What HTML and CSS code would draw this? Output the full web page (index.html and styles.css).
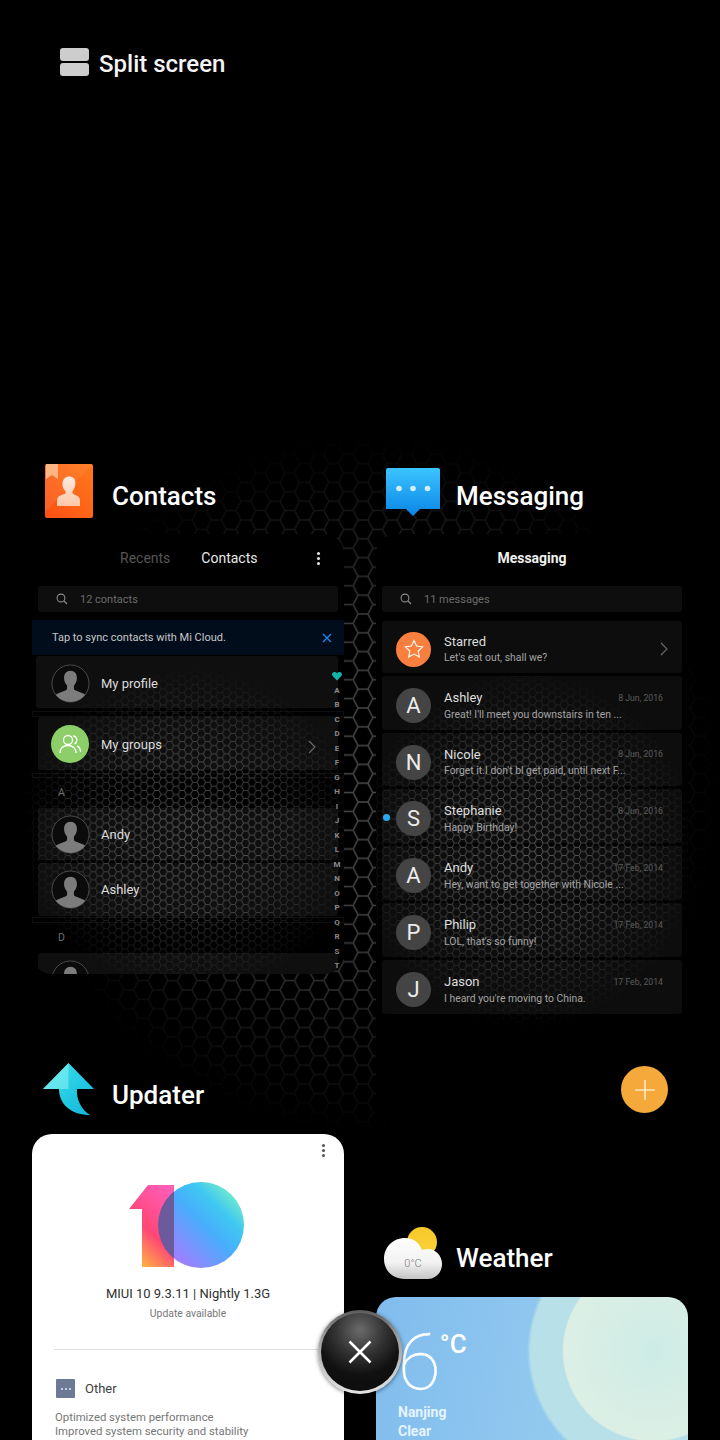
FILE: index.html
```html
<!DOCTYPE html>
<html lang="en">
<head>
<meta charset="utf-8">
<title>Recents</title>
<link rel="stylesheet" href="styles.css">
</head>
<body>
<svg class="sprite" aria-hidden="true">
  <defs>
    <pattern id="hex-big" width="29.3" height="18.8" patternUnits="userSpaceOnUse" patternTransform="translate(1.63 12.4)">
      <path d="M0 9.4 4.885 0H14.65L19.54 9.4 14.65 18.8H4.885ZM19.54 9.4H29.3" fill="none" stroke="#4c4c4c" stroke-width="1.5"/>
    </pattern>
    <pattern id="hex-small" width="12.69" height="8.14" patternUnits="userSpaceOnUse">
      <path d="M0 4.07 2.115 0H6.345L8.46 4.07 6.345 8.14H2.115ZM8.46 4.07H12.69" fill="none" stroke="#5c5c5c" stroke-width=".9"/>
    </pattern>
    <symbol id="person" viewBox="0 0 40 40">
      <clipPath id="ring"><circle cx="20" cy="20" r="19"/></clipPath>
      <circle cx="20" cy="20" r="19" fill="#0b0b0b" stroke="#4e4e4e" stroke-width="1"/>
      <g clip-path="url(#ring)" fill="#7c7c7c">
        <path d="M20 7c4.2 0 6.6 3 6.6 7.4 0 3.2-1.3 6.1-3.1 7.6v3.1c0 1.2 1 1.7 3.2 2.6l6.3 2.6c2 .9 3.5 2.2 4 4V40H3v-5.7c.5-1.8 2-3.100 4-4l6.300-2.600c2.200-.9 3.200-1.400 3.200-2.600V22c-1.800-1.500-3.100-4.400-3.100-7.600C13.400 10 15.800 7 20 7Z"/>
      </g>
    </symbol>
    <symbol id="search" viewBox="0 0 12 12">
      <circle cx="5" cy="5" r="3.900" fill="none" stroke="#8a8a8a" stroke-width="1.100"/>
      <path d="M8 8l3 3" stroke="#8a8a8a" stroke-width="1.200" fill="none"/>
    </symbol>
    <symbol id="chevron" viewBox="0 0 8 14">
      <path d="M1 1l6 6-6 6" fill="none" stroke="#6a6a6a" stroke-width="1.100"/>
    </symbol>
    <linearGradient id="g-contacts" x1="1" y1="0" x2="0" y2="1"><stop offset="0" stop-color="#ff7a1a"/><stop offset="1" stop-color="#fb4f14"/></linearGradient>
    <linearGradient id="g-person" x1="0" y1="0" x2="0" y2="1"><stop offset="0" stop-color="#fff" stop-opacity=".85"/><stop offset="1" stop-color="#ffe2cf" stop-opacity=".8"/></linearGradient>
    <linearGradient id="g-msg" x1="0" y1="0" x2="0" y2="1"><stop offset="0" stop-color="#3cc4ff"/><stop offset="1" stop-color="#0a86e6"/></linearGradient>
    <linearGradient id="g-up" x1="0" y1="0" x2="1" y2="1"><stop offset="0" stop-color="#3fe3ee"/><stop offset="1" stop-color="#0fb6d8"/></linearGradient>
    <linearGradient id="g-one" x1=".7" y1="0" x2=".2" y2="1"><stop offset="0" stop-color="#ff5cb4"/><stop offset=".55" stop-color="#ff4676"/><stop offset="1" stop-color="#ffbe3e"/></linearGradient>
    <linearGradient id="g-zero" x1="0" y1="1" x2="1" y2="0"><stop offset=".14" stop-color="#a57cff"/><stop offset=".52" stop-color="#48aefc"/><stop offset=".7" stop-color="#3fc8f2"/><stop offset=".88" stop-color="#72ecca"/></linearGradient>
    <linearGradient id="g-cloud" x1="0" y1="0" x2="0" y2="1"><stop offset="0" stop-color="#ffffff"/><stop offset=".6" stop-color="#f2f2f2"/><stop offset="1" stop-color="#c4c4c4"/></linearGradient>
    <linearGradient id="g-sun" x1="0" y1="0" x2="0" y2="1"><stop offset="0" stop-color="#f5c82a"/><stop offset="1" stop-color="#ffd23a"/></linearGradient>
  </defs>
</svg>

<main class="recents">
  <svg class="wallpaper" aria-hidden="true"><rect width="100%" height="100%" fill="url(#hex-big)"/></svg>

  <div class="split">
    <span class="split-icon"><i></i><i></i></span>
    <span class="split-label">Split screen</span>
  </div>

  <div class="columns">
    <section class="column">
      <header class="app-head">
        <svg class="icon-contacts" viewBox="0 0 48 54">
          <rect width="48" height="54" rx="2" fill="url(#g-contacts)"/>
          <path d="M0 0H48L0 48Z" fill="#fff" opacity=".07"/>
          <path d="M1 0h12v15l-6-4-6 4Z" fill="#ffc79a" opacity=".8"/>
          <path d="M17.500 20c0-5 3-7.500 6.800-7.500 4.200 0 6.500 3 6.100 7.500-.3 3-1.300 5.500-2.900 7.200v2.300l4.500 2.200c2 1 3 2.600 3 4.800V42H12v-5.500c0-2.200 1-3.800 3-4.800l5.500-2.200v-2.300c-1.700-1.700-3-4-3-7.200Z" fill="url(#g-person)"/>
        </svg>
        <h2 class="app-title">Contacts</h2>
      </header>

      <div class="card card-dark card-contacts">
        <svg class="card-hex card-hex-left" aria-hidden="true"><rect width="100%" height="100%" fill="url(#hex-small)"/></svg>
        <div class="tabs">
          <span class="tab-muted">Recents</span>
          <span class="tab-active">Contacts</span>
          <span class="kebab kebab-light"><i></i><i></i><i></i></span>
        </div>
        <div class="search"><svg class="search-icon"><use href="#search"/></svg><span>12 contacts</span></div>
        <div class="banner"><span>Tap to sync contacts with Mi Cloud.</span>
          <svg class="banner-x" viewBox="0 0 10 10"><path d="M1 1l8 8M9 1l-8 8" stroke="#1e86f0" stroke-width="1.300"/></svg>
        </div>
        <div class="row row-profile"><svg class="person"><use href="#person"/></svg><span class="row-name">My profile</span></div>
        <div class="strip strip-a"></div>
        <div class="row row-groups">
          <span class="group-badge">
            <svg viewBox="0 0 24 24" width="24" height="24" fill="none" stroke="#fff" stroke-width="1.300">
              <circle cx="10" cy="8" r="4.500"/><path d="M2 21c0-4.500 3-7.500 8-7.500s8 3 8 7.500M15 3.800c2.300.4 3.800 2.200 3.800 4.300 0 1.800-1 3.200-2.300 4M19 13.800c2.200 1 3.500 3.500 3.500 6.200"/>
            </svg>
          </span>
          <span class="row-name">My groups</span>
          <svg class="row-chevron row-chevron-groups"><use href="#chevron"/></svg>
        </div>
        <div class="strip strip-b"></div>
        <div class="section-letter">A</div>
        <div class="row"><svg class="person"><use href="#person"/></svg><span class="row-name">Andy</span></div>
        <div class="row row-tall"><svg class="person"><use href="#person"/></svg><span class="row-name">Ashley</span></div>
        <div class="strip strip-c"></div>
        <div class="section-letter">D</div>
        <div class="row row-cut"><svg class="person"><use href="#person"/></svg></div>
        <div class="index">
          <svg class="index-heart" viewBox="0 0 12 10"><path d="M6 10 .8 4.800C-.8 3 .3 0 3 0c1.300 0 2.300.7 3 1.600C6.700.7 7.700 0 9 0c2.700 0 3.800 3 2.200 4.800Z" fill="#12b5ad"/></svg>
          <span>A</span><span>B</span><span>C</span><span>D</span><span>E</span><span>F</span><span>G</span><span>H</span><span>I</span><span>J</span><span>K</span><span>L</span><span>M</span><span>N</span><span>O</span><span>P</span><span>Q</span><span>R</span><span>S</span><span>T</span>
        </div>
      </div>

      <header class="app-head app-head-next">
        <svg class="icon-updater" viewBox="0 0 51 52">
          <path d="M25.500 0 51 26H34C33 37 39 47 47 52 29 52 16 42 16 26H0Z" fill="url(#g-up)"/>
          <path d="M25.500 0V26H0Z" fill="#8ff4f4" opacity=".55"/>
        </svg>
        <h2 class="app-title app-title-up">Updater</h2>
      </header>

      <div class="card card-light">
        <span class="kebab kebab-dark"><i></i><i></i><i></i></span>
        <svg class="miui-logo" viewBox="0 0 116 87">
          <defs><clipPath id="one-clip"><path d="M19 3H45V85H13V27H0Z"/></clipPath></defs>
          <circle cx="72" cy="43" r="43" fill="url(#g-zero)"/>
          <path d="M19 3H45V85H13V27H0Z" fill="url(#g-one)"/>
          <circle cx="72" cy="43" r="43" fill="#6b5a9c" clip-path="url(#one-clip)"/>
        </svg>
        <div class="version">MIUI 10 9.3.11 | Nightly 1.3G</div>
        <div class="update-note">Update available</div>
        <hr class="rule">
        <div class="other"><span class="other-icon"><i></i><i></i><i></i></span><span>Other</span></div>
        <p class="notes">Optimized system performance<br>Improved system security and stability</p>
      </div>
    </section>

    <section class="column">
      <header class="app-head">
        <svg class="icon-msg" viewBox="0 0 54 48">
          <path d="M2 0H52a2 2 0 0 1 2 2V41H34l-7 7-7-7H0V2A2 2 0 0 1 2 0Z" fill="url(#g-msg)"/>
          <circle cx="13" cy="20.500" r="2.800" fill="#cfeeff"/><circle cx="27" cy="20.500" r="2.800" fill="#cfeeff"/><circle cx="41.500" cy="20.500" r="2.800" fill="#cfeeff"/>
        </svg>
        <h2 class="app-title">Messaging</h2>
      </header>

      <div class="card card-dark card-messages">
        <svg class="card-hex card-hex-right" aria-hidden="true"><rect width="100%" height="100%" fill="url(#hex-small)"/></svg>
        <div class="msg-title">Messaging</div>
        <div class="search"><svg class="search-icon"><use href="#search"/></svg><span>11 messages</span></div>
        <div class="msg-list">
          <div class="msg msg-starred">
            <span class="msg-avatar msg-avatar-star">
              <svg viewBox="0 0 20 20" width="20" height="20"><path d="M10 1.500 12.600 7l6 .8-4.400 4.200 1.100 6L10 15.100 4.700 18l1.100-6L1.400 7.800l6-.8Z" fill="none" stroke="#fff" stroke-width="1.100"/></svg>
            </span>
            <div class="msg-body"><div class="msg-top"><span class="msg-name">Starred</span></div><div class="msg-text">Let's eat out, shall we?</div></div>
            <svg class="row-chevron row-chevron-star"><use href="#chevron"/></svg>
          </div>
          <div class="msg">
            <span class="msg-avatar">A</span>
            <div class="msg-body"><div class="msg-top"><span class="msg-name">Ashley</span><span class="msg-date">8 Jun, 2016</span></div><div class="msg-text">Great! I'll meet you downstairs in ten ...</div></div>
          </div>
          <div class="msg msg-short">
            <span class="msg-avatar">N</span>
            <div class="msg-body"><div class="msg-top"><span class="msg-name">Nicole</span><span class="msg-date">8 Jun, 2016</span></div><div class="msg-text">Forget it.I don't bl get paid, until next F...</div></div>
          </div>
          <div class="msg">
            <span class="unread"></span>
            <span class="msg-avatar">S</span>
            <div class="msg-body"><div class="msg-top"><span class="msg-name">Stephanie</span><span class="msg-date">8 Jun, 2016</span></div><div class="msg-text">Happy Birthday!</div></div>
          </div>
          <div class="msg">
            <span class="msg-avatar">A</span>
            <div class="msg-body"><div class="msg-top"><span class="msg-name">Andy</span><span class="msg-date">17 Feb, 2014</span></div><div class="msg-text">Hey, want to get together with Nicole ...</div></div>
          </div>
          <div class="msg">
            <span class="msg-avatar">P</span>
            <div class="msg-body"><div class="msg-top"><span class="msg-name">Philip</span><span class="msg-date">17 Feb, 2014</span></div><div class="msg-text">LOL, that's so funny!</div></div>
          </div>
          <div class="msg">
            <span class="msg-avatar">J</span>
            <div class="msg-body"><div class="msg-top"><span class="msg-name">Jason</span><span class="msg-date">17 Feb, 2014</span></div><div class="msg-text">I heard you're moving to China.</div></div>
          </div>
        </div>
        <span class="fab"><svg viewBox="0 0 20 20" width="20" height="20"><path d="M10 0V20M0 10H20" stroke="#fff" stroke-width="1.200"/></svg></span>
      </div>

      <header class="app-head app-head-weather">
        <svg class="icon-weather" viewBox="0 0 58 54">
          <circle cx="38" cy="16" r="15" fill="url(#g-sun)"/>
          <path d="M21 53C8 53 0 44 0 33 0 21 9 12 21 12 29 12 35 16 38 24 40 23.500 42 23 44 23 52 23 58 30 58 38 58 47 51 53 44 53Z" fill="url(#g-cloud)"/>
          <text class="icon-weather-text" x="29" y="41" text-anchor="middle">0°C</text>
        </svg>
        <h2 class="app-title app-title-up">Weather</h2>
      </header>

      <div class="card card-weather">
        <div class="temp"><span class="temp-value">6</span><span class="temp-unit">°C</span></div>
        <div class="place">Nanjing</div>
        <div class="place">Clear</div>
      </div>
    </section>
  </div>

  <button class="close" type="button" aria-label="Close all">
    <svg viewBox="0 0 24 24" width="24" height="24"><path d="M1.500 1.500l21 21M22.500 1.500l-21 21" stroke="#fff" stroke-width="2.500"/></svg>
  </button>
</main>
</body>
</html>
```
FILE: styles.css
```css
* { box-sizing: border-box; }
html, body { margin: 0; padding: 0; background: #000; }
body { font-family: Roboto, "Liberation Sans", sans-serif; }
.sprite { position: absolute; width: 0; height: 0; }

.recents { position: relative; width: 720px; height: 1440px; overflow: hidden; background: #000; color: #fff; }
.wallpaper { position: absolute; left: 0; top: 0; width: 720px; height: 1130px;
  -webkit-mask-image: radial-gradient(circle 350px at 370px 785px, #000 0, rgba(0,0,0,.85) 45%, rgba(0,0,0,.35) 75%, transparent 100%);
  mask-image: radial-gradient(circle 350px at 370px 785px, #000 0, rgba(0,0,0,.85) 45%, rgba(0,0,0,.35) 75%, transparent 100%); }

.split { position: relative; height: 460px; padding: 48px 0 0 60px; display: flex; align-items: flex-start; gap: 10px; }
.split-icon { display: flex; flex-direction: column; gap: 2px; width: 29px; }
.split-icon i { display: block; height: 13px; border-radius: 3px; background: #cdcdcd; }
.split-label { font-size: 24px; font-weight: 500; line-height: 30px; margin-top: 1px; color: #f4f4f4; }

.columns { position: relative; display: grid; grid-template-columns: 312px 312px; column-gap: 32px; padding-left: 32px; }
.column { display: flex; flex-direction: column; min-width: 0; }

.app-head { height: 74px; display: flex; align-items: flex-start; }
.app-head-next { margin-top: 86px; }
.app-head-weather { margin-top: 99px; }
.app-title { margin: 21px 0 0; font-size: 26px; font-weight: 500; line-height: 30px; color: #fff; }
.app-title-up { margin-top: 20px; }
.icon-contacts { width: 48px; height: 54px; margin: 4px 19px 0 13px; }
.icon-updater { width: 51px; height: 52px; margin: 3px 18px 0 11px; }
.icon-msg { width: 54px; height: 48px; margin: 8px 16px 0 10px; }
.icon-weather { width: 58px; height: 54px; margin: 3px 14px 0 8px; }
.icon-weather-text { font-family: Roboto, sans-serif; font-size: 11px; font-weight: 300; fill: #7a7a7a; }

.card { position: relative; width: 312px; overflow: hidden; }
.card-dark { background: #000; border-radius: 20px; }
.card-contacts { height: 440px; }
.card-messages { height: 590px; }
.card-hex { position: absolute; left: 0; top: 0; width: 100%; height: 100%; }
.card-hex-left {
  -webkit-mask-image: radial-gradient(ellipse 175px 165px at 158px 296px, #000 0, rgba(0,0,0,.7) 50%, transparent 100%);
  mask-image: radial-gradient(ellipse 175px 165px at 158px 296px, #000 0, rgba(0,0,0,.7) 50%, transparent 100%); }
.card-hex-right {
  -webkit-mask-image: radial-gradient(ellipse 175px 180px at 150px 315px, #000 0, rgba(0,0,0,.7) 50%, transparent 100%);
  mask-image: radial-gradient(ellipse 175px 180px at 150px 315px, #000 0, rgba(0,0,0,.7) 50%, transparent 100%); }

.tabs { position: relative; height: 52px; display: flex; align-items: center; padding: 0 0 4px 88px; gap: 31px; font-size: 14px; }
.tab-muted { color: #555; }
.tab-active { color: #e8e8e8; }
.kebab { display: flex; flex-direction: column; gap: 2px; }
.kebab i { display: block; width: 3px; height: 3px; border-radius: 50%; }
.kebab-light { position: absolute; left: 285px; top: 18px; }
.kebab-light i { background: #e4e4e4; }
.kebab-dark { position: absolute; right: 19px; top: 10px; }
.kebab-dark i { background: #555; }

.search { position: relative; height: 26px; margin: 0 6px; display: flex; align-items: center; padding-left: 18px; gap: 12px; border-radius: 3px; background: #0e0e0e; font-size: 11px; color: #6b6b6b; }
.search-icon { width: 12px; height: 12px; flex: none; }

.banner { position: relative; height: 35px; margin: 8px 0 1px; padding: 0 12px 0 20px; display: flex; align-items: center; justify-content: space-between; background: #020d1c; font-size: 11px; color: #c8c8c8; }
.banner-x { width: 10px; height: 10px; }

.row { position: relative; height: 52px; margin: 0 6px; display: flex; align-items: center; padding-left: 13px; border-radius: 3px; background: rgba(255,255,255,.06); }
.row-profile { margin-left: 4px; padding: 3px 0 0 15px; }
.row-groups { height: 53px; padding-top: 1px; }
.row-tall { height: 53px; margin-top: 3px; }
.row-cut { height: 52px; align-items: flex-start; padding-top: 7px; }
.person { width: 39px; height: 39px; flex: none; }
.row-name { margin-left: 11px; font-size: 13px; color: #dcdcdc; }
.row-chevron { position: absolute; width: 8px; height: 14px; }
.row-chevron-groups { right: 22px; top: 23px; }
.row-chevron-star { right: 14px; top: 21px; }
.group-badge { width: 38px; height: 38px; margin-right: 1px; border-radius: 50%; background: #8ccf68; display: flex; align-items: center; justify-content: center; flex: none; }
.strip { position: relative; border: 1px solid rgba(130,150,170,.09); }
.strip-a { height: 6px; margin-top: 3px; }
.strip-b { height: 5px; margin-top: 3px; }
.strip-c { height: 6px; margin-top: 1px; }
.section-letter { position: relative; height: 30px; padding: 9px 0 0 26px; font-size: 10.500px; line-height: 12px; color: #6e6e6e; }

.index { position: absolute; top: 135px; right: 0; width: 14px; display: flex; flex-direction: column; align-items: center; font-size: 8px; font-weight: 700; color: #8a8a8a; }
.index span, .index-heart { height: 14.500px; line-height: 14.500px; }
.index-heart { width: 10px; }

.card-light { flex: 1; height: 340px; background: #fff; border-radius: 20px 20px 0 0; display: flex; flex-direction: column; align-items: center; color: #333; }
.miui-logo { width: 116px; height: 87px; margin-top: 48px; flex: none; margin-right: 2px; }
.version { margin-top: 17px; font-size: 13px; line-height: 16px; color: #303030; }
.update-note { margin-top: 5px; font-size: 10.400px; line-height: 14px; color: #777; }
.rule { width: 265px; margin: 28px 0 0 -3px; border: 0; border-top: 1px solid #dedede; }
.other { align-self: flex-start; margin: 29px 0 0 24px; display: flex; align-items: center; gap: 10px; font-size: 13px; color: #404040; }
.other-icon { width: 19px; height: 19px; border-radius: 1px; background: #6c7a95; display: flex; align-items: center; justify-content: center; gap: 2px; }
.other-icon i { width: 2px; height: 2px; border-radius: 50%; background: #e4e8f0; }
.notes { align-self: flex-start; margin: 12px 0 0 23px; font-size: 11.350px; line-height: 14px; color: #777; white-space: nowrap; }

.msg-title { position: relative; height: 52px; padding-bottom: 4px; display: flex; align-items: center; justify-content: center; font-size: 14px; font-weight: 700; color: #f0f0f0; }
.msg-list { position: relative; margin: 9px 6px 0; display: flex; flex-direction: column; gap: 3px; }
.msg { position: relative; height: 54px; padding: 5px 19px 0 14px; display: flex; align-items: center; gap: 13px; border-radius: 3px; background: rgba(255,255,255,.05); }
.msg-starred { height: 52px; padding-top: 4px; }
.msg-short { height: 53px; }
.msg-avatar { width: 35px; height: 35px; flex: none; border-radius: 50%; background: #444; display: flex; align-items: center; justify-content: center; font-size: 22px; font-weight: 400; color: #ececec; }
.msg-avatar-star { background: #f97f3e; }
.msg-body { flex: 1; min-width: 0; }
.msg-top { display: flex; justify-content: space-between; align-items: center; height: 16px; }
.msg-name { font-size: 13px; color: #dedede; }
.msg-date { font-size: 8.700px; color: #5c5c5c; }
.msg-text { margin-top: 2px; font-size: 10.400px; line-height: 14px; color: #a4a4a4; white-space: nowrap; overflow: hidden; }
.unread { position: absolute; left: 1px; top: 25px; width: 7px; height: 7px; border-radius: 50%; background: #2aa8f5; }
.fab { position: absolute; right: 20px; bottom: 11px; width: 47px; height: 47px; border-radius: 50%; background: #f5a93b; display: flex; align-items: center; justify-content: center; }

.card-weather { height: 160px; border-radius: 20px 20px 0 0; color: #e6f4ff;
  background:
    radial-gradient(circle 91px at 277px 54px, #cdece6 0, #dcefe5 98%, transparent 100%),
    radial-gradient(circle 126px at 277px 54px, #b4deea 0, #b8e0e8 97%, transparent 100%),
    linear-gradient(100deg, #80bcee 0, #9ed2ee 100%);
}
.temp { display: flex; align-items: flex-start; padding: 26px 0 0 22px; height: 106px; }
.temp-value { font-size: 78px; font-weight: 100; line-height: 80px; color: #fff; -webkit-text-stroke: .4px #fff; }
.temp-unit { font-size: 26px; font-weight: 500; line-height: 30px; margin: 6px 0 0 -1px; color: #fff; }
.place { padding-left: 22px; font-size: 14px; font-weight: 700; line-height: 19px; }

.close { position: absolute; left: 318px; top: 1310px; width: 84px; height: 84px; padding: 3px; border: 0; border-radius: 50%; display: flex; align-items: center; justify-content: center;
  background:
    radial-gradient(circle at 50% 22%, #6a6a6a 0, #333 34%, #111 62%, #0b0b0b 100%) content-box,
    linear-gradient(180deg, #5c5c5c 0, #9a9a9a 30%, #e4e4e4 100%) border-box;
  box-shadow: 0 1px 4px rgba(0,0,0,.5); }
```
